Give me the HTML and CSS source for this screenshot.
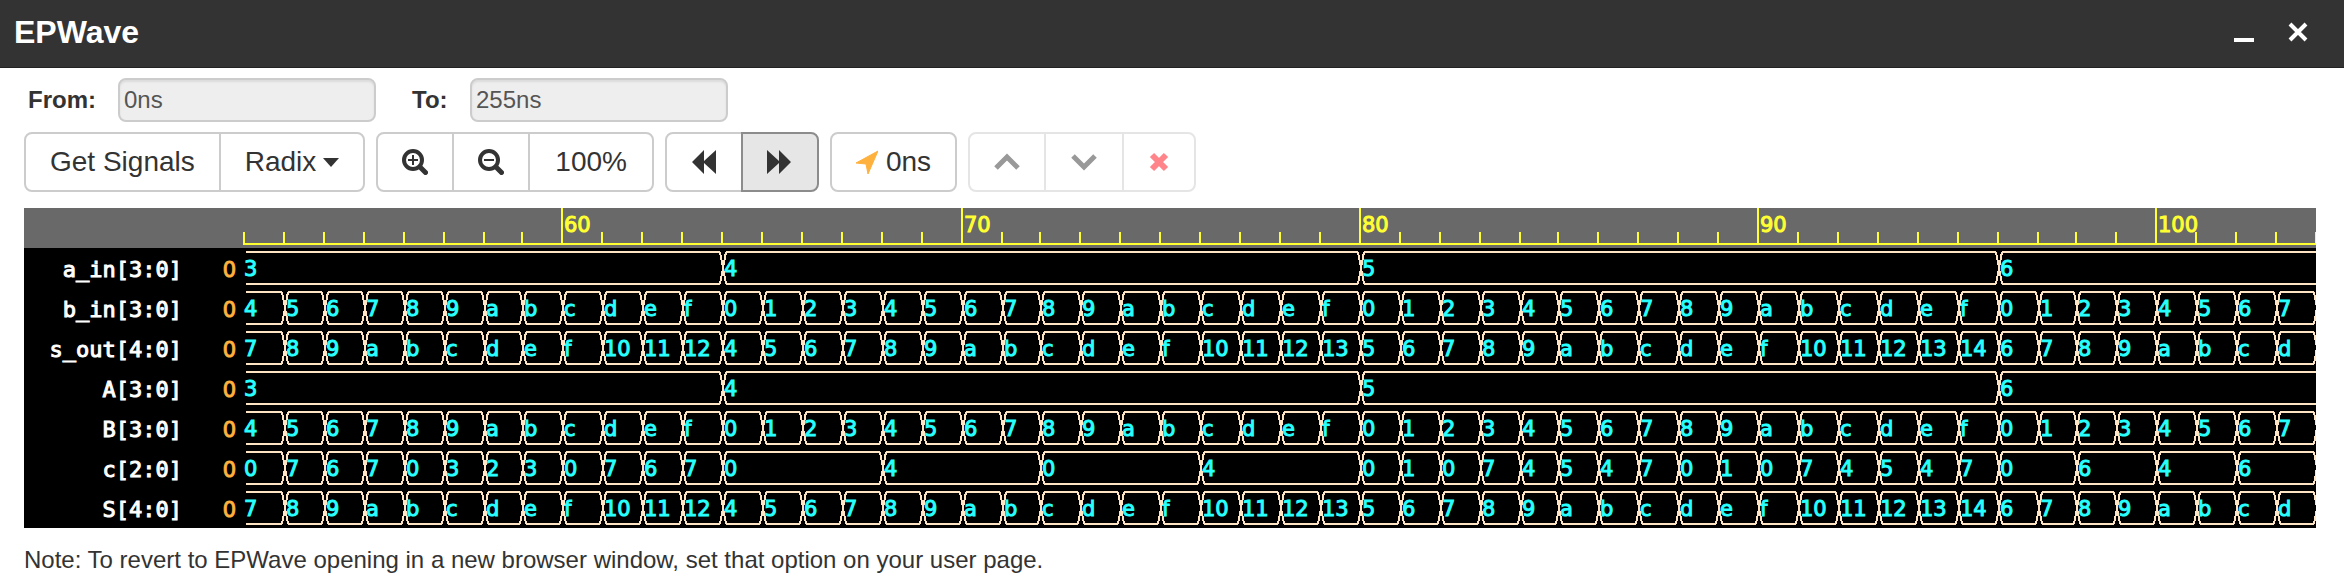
FILE: index.html
```
<!DOCTYPE html>
<html lang="en">
<head>
<meta charset="utf-8">
<title>EPWave</title>
<link rel="stylesheet" href="styles.css">
</head>
<body>
<header class="titlebar">
  <h1 class="title">EPWave</h1>
  <button class="window-button" type="button" aria-label="Minimize">
    <svg width="22" height="24" viewBox="0 0 22 24"><path d="M1 20H21" stroke="currentColor" stroke-width="4"/></svg>
  </button>
  <button class="window-button" type="button" aria-label="Close">
    <svg width="22" height="24" viewBox="0 0 22 24"><path d="M3 4L19 20M19 4L3 20" stroke="currentColor" stroke-width="4"/></svg>
  </button>
</header>
<main class="content">
  <form class="range">
    <label class="range-label" for="from">From:</label>
    <input class="range-input" id="from" type="text" value="0ns" readonly>
    <label class="range-label range-label-to" for="to">To:</label>
    <input class="range-input" id="to" type="text" value="255ns" readonly>
  </form>
  <div class="toolbar">
    <div class="group">
      <button class="btn" type="button">Get Signals</button>
      <button class="btn" type="button">Radix<span class="caret"></span></button>
    </div>
    <div class="group">
      <button class="btn" type="button" aria-label="Zoom in">
        <svg width="26" height="26" viewBox="0 0 26 26" fill="none" stroke="currentColor"><circle cx="11" cy="11" r="9" stroke-width="4"/><path d="M18 18L23.500 23.500" stroke-width="5" stroke-linecap="round"/><path d="M6 11H16M11 6V16" stroke-width="2"/></svg>
      </button>
      <button class="btn" type="button" aria-label="Zoom out">
        <svg width="26" height="26" viewBox="0 0 26 26" fill="none" stroke="currentColor"><circle cx="11" cy="11" r="9" stroke-width="4"/><path d="M18 18L23.500 23.500" stroke-width="5" stroke-linecap="round"/><path d="M6 11H16" stroke-width="2"/></svg>
      </button>
      <button class="btn btn-wide" type="button">100%</button>
    </div>
    <div class="group">
      <button class="btn btn-wide" type="button" aria-label="Previous edge">
        <svg width="24" height="24" viewBox="0 0 24 24" fill="currentColor"><path d="M0 12L12 0V11L24 0V24L12 13V24Z"/></svg>
      </button>
      <button class="btn btn-active" type="button" aria-label="Next edge" aria-pressed="true">
        <svg width="24" height="24" viewBox="0 0 24 24" fill="currentColor"><path d="M24 12L12 0V11L0 0V24L12 13V24Z"/></svg>
      </button>
    </div>
    <div class="group">
      <button class="btn btn-cursor" type="button">
        <svg class="cursor-icon" width="22" height="24" viewBox="0 0 22 24"><path d="M22 1L12 24L10 14L0 13Z" fill="currentColor" stroke="currentColor" stroke-linejoin="round"/></svg>0ns
      </button>
    </div>
    <div class="group group-disabled">
      <button class="btn" type="button" aria-label="Move up" disabled>
        <svg width="26" height="18" viewBox="0 0 26 18"><path d="M2 15L13 4L24 15" fill="none" stroke="currentColor" stroke-width="5"/></svg>
      </button>
      <button class="btn btn-wide" type="button" aria-label="Move down" disabled>
        <svg width="26" height="18" viewBox="0 0 26 18"><path d="M2 3L13 14L24 3" fill="none" stroke="currentColor" stroke-width="5"/></svg>
      </button>
      <button class="btn btn-wide btn-remove" type="button" aria-label="Remove" disabled>
        <svg width="20" height="20" viewBox="0 0 20 20"><path d="M3 3L17 17M17 3L3 17" fill="none" stroke="currentColor" stroke-width="6"/></svg>
      </button>
    </div>
  </div>
  <section class="viewer" id="viewer" aria-label="Waveforms">
    <div class="ruler"><svg class="wave" id="ruler"></svg></div>
  </section>
  <p class="note">Note: To revert to EPWave opening in a new browser window, set that option on your user page.</p>
</main>
<script src="wave.js"></script>
</body>
</html>
```
FILE: styles.css
```
* {
  box-sizing: border-box;
}

body {
  margin: 0;
  background: #fff;
  color: #333;
  font-family: "Liberation Sans", Arial, sans-serif;
  font-size: 24px;
  line-height: 40px;
}

button,
input {
  font: inherit;
}

svg {
  display: block;
  flex-shrink: 0;
}

.titlebar {
  display: flex;
  align-items: center;
  gap: 32px;
  height: 68px;
  padding: 0 35px 4px 14px;
  border-bottom: 1px solid #222;
  background: #333;
}

.title {
  flex: 1;
  margin: 0;
  color: #fff;
  font-size: 32px;
}

.window-button {
  padding: 0;
  border: 0;
  background: none;
  color: #fff;
}

.content {
  padding: 10px 28px 0 24px;
}

.range {
  display: flex;
  align-items: center;
}

.range-label {
  width: 94px;
  padding-left: 4px;
  font-weight: bold;
}

.range-label-to {
  margin-left: 32px;
  width: 62px;
}

.range-input {
  width: 258px;
  height: 44px;
  padding: 0 4px;
  border: 2px solid #ccc;
  border-radius: 8px;
  background: #eee;
  color: #555;
  box-shadow: inset 0 2px 2px rgba(0, 0, 0, 0.08);
}

.toolbar {
  display: flex;
  gap: 11px;
  margin: 10px 0 16px;
}

.group {
  display: flex;
}

.btn {
  display: flex;
  align-items: center;
  height: 60px;
  padding: 0 24px;
  border: 2px solid #ccc;
  background: #fff;
  color: #333;
  font-size: 28px;
}

.btn + .btn {
  margin-left: -2px;
}

.btn:first-child {
  border-radius: 8px 0 0 8px;
}

.btn:last-child {
  border-radius: 0 8px 8px 0;
}

.btn:only-child {
  border-radius: 8px;
}

.btn-wide {
  padding: 0 25px;
}

.btn-active {
  padding-right: 26px;
  border-color: #8c8c8c;
  background: #e6e6e6;
}

.caret {
  margin-left: 7px;
  border: 8px solid transparent;
  border-top: 9px solid #333;
  border-bottom: 0;
}

.cursor-icon {
  margin-right: 8px;
  color: #ffb13d;
}

.group-disabled .btn {
  border-color: #e5e5e5;
  color: #999;
}

.group-disabled .btn-remove {
  color: #ff858b;
}

.viewer {
  background: #000;
}

.ruler {
  padding-left: 214px;
  background: #696969;
}

.signal {
  display: flex;
}

.signal-name {
  width: 158px;
  color: #fff;
  font-family: "DejaVu Sans Mono", monospace;
  font-size: 22px;
  line-height: 44px;
  height: 40px;
  text-align: right;
  -webkit-text-stroke: 1px #fff;
}

.signal-value {
  width: 56px;
  padding-right: 2px;
  color: #ffb13d;
  font-family: "DejaVu Sans", sans-serif;
  font-size: 21px;
  line-height: 44px;
  height: 40px;
  text-align: right;
  -webkit-text-stroke: 1px #ffb13d;
}

.wave {
  flex: 1;
  width: 100%;
  min-width: 0;
  height: 40px;
  overflow: hidden;
  font-family: "DejaVu Sans", sans-serif;
  font-size: 21px;
}

.wave-line {
  fill: none;
  stroke: #ffe4c4;
  stroke-width: 2;
  shape-rendering: crispEdges;
}

.wave-text {
  fill: #28ffff;
  stroke: #28ffff;
}

.ruler-line {
  fill: none;
  stroke: #ffff32;
  stroke-width: 2;
  shape-rendering: crispEdges;
}

.ruler-text {
  fill: #ffff32;
  stroke: #ffff32;
}

.note {
  margin: 12px 0 0;
}
```
FILE: wave.js
```
const START = 52;
const END = 104;
const NS = "http://www.w3.org/2000/svg";

// Horizontal position of a time, snapped to whole even pixels.
function timeX(t) {
  const n = t - START;
  return 6 + 40 * n - 2 * Math.floor((n + 6) / 13);
}

function add(parent, tag, attrs, text) {
  const el = document.createElementNS(NS, tag);
  for (const key in attrs) el.setAttribute(key, attrs[key]);
  if (text !== undefined) el.textContent = text;
  parent.appendChild(el);
}

function drawRuler(svg) {
  let d = `M${timeX(START) - 1} 36H${timeX(END)}`;
  for (let t = START; t <= END; t++) {
    d += `M${timeX(t)} ${t % 10 ? 24 : 0}V36`;
    if (t % 10 === 0) {
      add(svg, "text", { x: timeX(t) + 2, y: 24, class: "ruler-text" }, t);
    }
  }
  add(svg, "path", { d, class: "ruler-line" });
}

function drawWave(svg, valueAt) {
  let d = "";
  let from = START;
  for (let t = START + 1; t <= END; t++) {
    const changes = valueAt(t) !== valueAt(from);
    if (t < END && !changes) continue;
    const first = from === START;
    const left = timeX(from) + (first ? 2 : 4);
    const right = timeX(t) - (changes ? 2 : 0);
    d += `M${left} 4H${right}M${left} 36H${right}`;
    if (!first) d += `M${left} 4L${left - 3} 20L${left} 36`;
    if (changes) d += `M${right} 4L${right + 3} 20L${right} 36`;
    add(svg, "text", { x: timeX(from) + (first ? 0 : 2), y: 28, class: "wave-text" }, valueAt(from));
    from = t;
  }
  add(svg, "path", { d, class: "wave-line" });
}

const carries = "0767032307670000444400004444" + "0107454701074547" + "006644660";
const a = t => (t >> 4).toString(16);
const b = t => (t & 15).toString(16);
const sum = t => ((t >> 4) + (t & 15)).toString(16);
const c = t => carries[t - START];

const signals = [
  ["a_in[3:0]", a],
  ["b_in[3:0]", b],
  ["s_out[4:0]", sum],
  ["A[3:0]", a],
  ["B[3:0]", b],
  ["c[2:0]", c],
  ["S[4:0]", sum]
];

drawRuler(document.getElementById("ruler"));

for (const [name, valueAt] of signals) {
  const row = document.createElement("div");
  row.className = "signal";
  row.innerHTML = `<span class="signal-name">${name}</span><span class="signal-value">0</span>`;
  const svg = document.createElementNS(NS, "svg");
  svg.setAttribute("class", "wave");
  row.appendChild(svg);
  drawWave(svg, valueAt);
  document.getElementById("viewer").appendChild(row);
}
```
